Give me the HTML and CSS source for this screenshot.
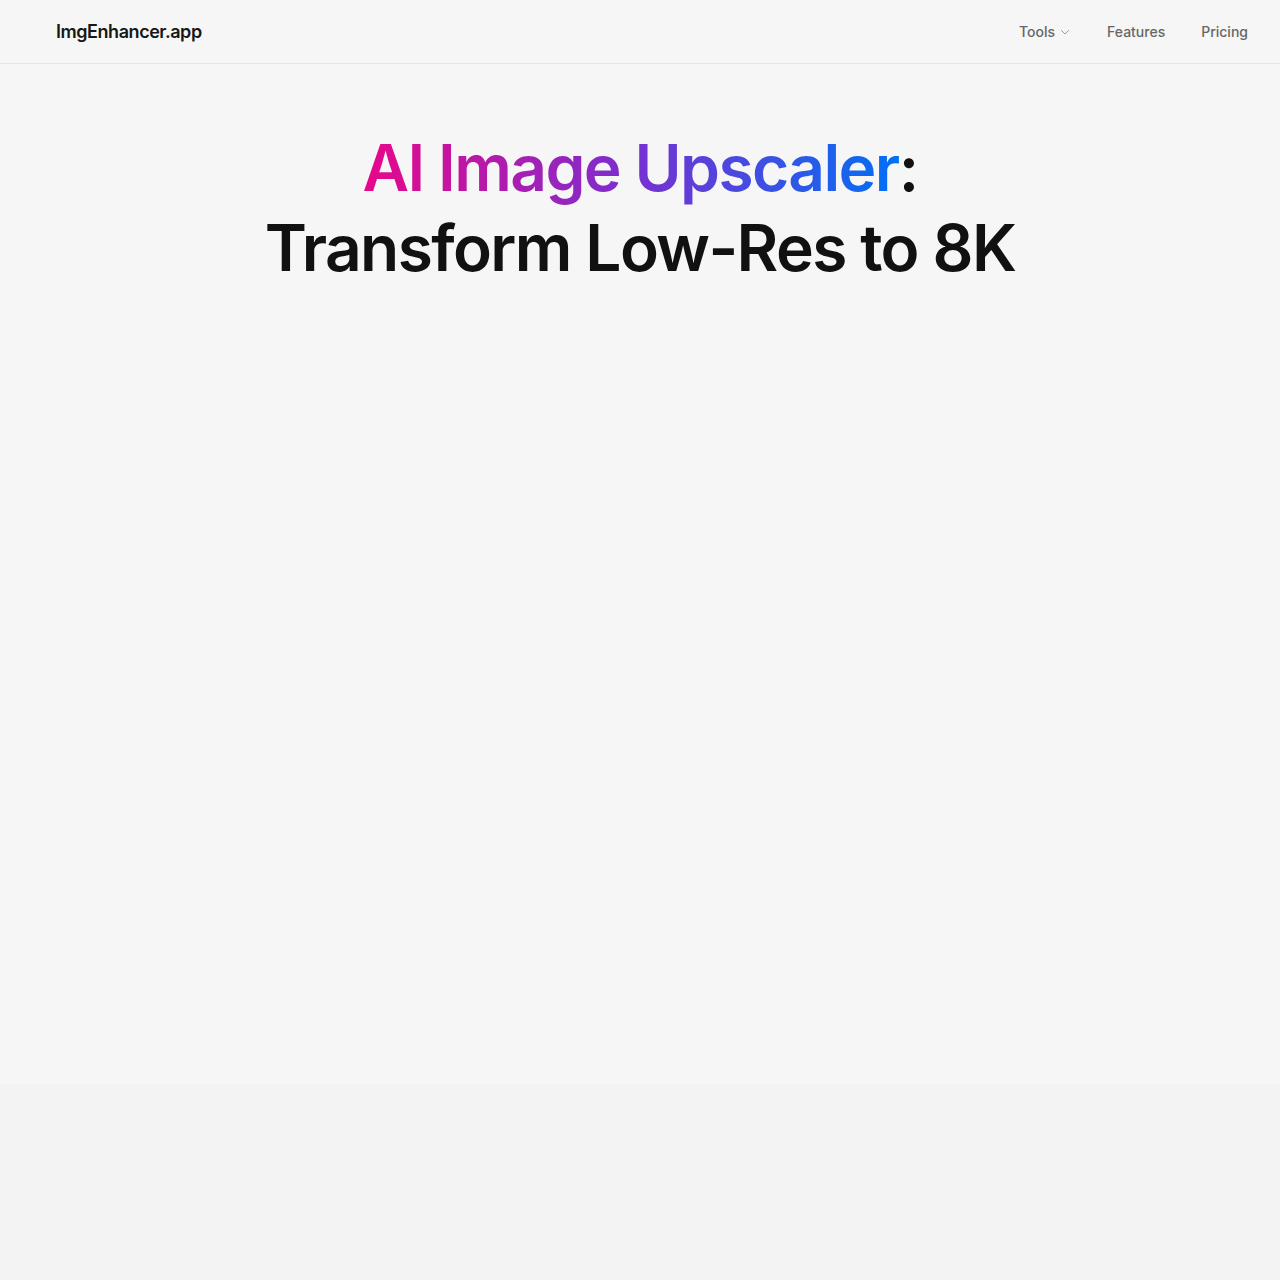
FILE: index.html
```html
<!DOCTYPE html>
<html lang="en">
<head>
<meta charset="utf-8">
<title>ImgEnhancer.app</title>
<link rel="stylesheet" href="styles.css">
</head>
<body>
<header class="header">
  <a class="logo" href="#">ImgEnhancer.app</a>
  <nav class="nav">
    <a class="nav-link" href="#">Tools
      <svg class="chev" width="12" height="12" viewBox="0 0 12 12" fill="none"><path d="M2.5 4.5l3.5 3.5 3.5-3.5" stroke="#9a9a9a" stroke-width="1" stroke-linecap="round" stroke-linejoin="round"/></svg>
    </a>
    <a class="nav-link" href="#">Features</a>
    <a class="nav-link" href="#">Pricing</a>
  </nav>
</header>
<main class="hero">
  <h1 class="title"><span class="grad">AI Image Upscaler</span>:<br>Transform Low-Res to 8K</h1>
</main>
<section class="lower"></section>
</body>
</html>
```

FILE: styles.css
```css
* { box-sizing: border-box; }
html, body { margin: 0; padding: 0; }
body {
  background: #f6f6f6;
  font-family: Inter, "Noto Sans", sans-serif;
  color: #111;
}
.header {
  height: 64px;
  display: flex;
  align-items: center;
  justify-content: space-between;
  padding: 0 32px 0 56px;
  border-bottom: 1px solid #e6e6e6;
}
.logo {
  font-size: 18px;
  font-weight: 600;
  color: #171717;
  text-decoration: none;
  letter-spacing: -0.45px;
}
.nav {
  display: flex;
  align-items: center;
  gap: 36px;
}
.nav-link {
  font-size: 14px;
  font-weight: 500;
  color: #666;
  text-decoration: none;
  display: flex;
  align-items: center;
  gap: 4px;
}
.chev { margin-top: 1px; }
.hero {
  height: 1020px;
  padding-top: 64px;
  text-align: center;
}
.title {
  margin: 0;
  font-size: 64px;
  line-height: 80px;
  font-weight: 600;
  letter-spacing: -1.6px;
  color: #111;
}
.grad {
  background: linear-gradient(90deg, #e8078a 0%, #7a2fd0 50%, #0070f5 100%);
  -webkit-background-clip: text;
  background-clip: text;
  color: transparent;
}
.lower {
  height: 196px;
  background: #f3f3f3;
}
```
